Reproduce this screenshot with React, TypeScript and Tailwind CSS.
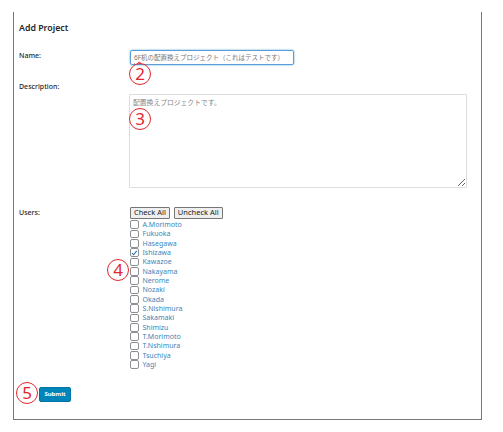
const USERS = [
  'A.Morimoto',
  'Fukuoka',
  'Hasegawa',
  'Ishizawa',
  'Kawazoe',
  'Nakayama',
  'Nerome',
  'Nozaki',
  'Okada',
  'S.Nishimura',
  'Sakamaki',
  'Shimizu',
  'T.Morimoto',
  'T.Nshimura',
  'Tsuchiya',
  'Yagi',
];

const CHECKED = ['Ishizawa'];

function Marker({ n, className }: { n: number; className: string }) {
  return (
    <div
      className={`absolute w-[22px] h-[22px] rounded-full border-[1.2px] border-[#e3262b] text-[#e3262b] text-[17px] leading-none flex items-center justify-center ${className}`}
    >
      <span className="-mt-[1px]">{n}</span>
    </div>
  );
}

function Box({ checked }: { checked: boolean }) {
  return (
    <span className="w-[8.5px] h-[8.5px] rounded-[2px] border border-[#8c8f94] bg-white flex items-center justify-center shrink-0">
      {checked && (
        <svg viewBox="0 0 10 10" className="w-[8px] h-[8px]">
          <path d="M1.5 5.2 L4 7.8 L8.8 1.8" fill="none" stroke="#2271b1" strokeWidth="1.6" />
        </svg>
      )}
    </span>
  );
}

export default function App() {
  return (
    <div
      className="min-h-[432px] bg-white pt-[12px] text-[#23282d]"
      style={{ fontFamily: '"Noto Sans", "Noto Sans CJK JP", sans-serif' }}
    >
      <div className="relative ml-[13px] w-[469px] h-[408px] border-x border-b border-[#777] pl-[5px] pr-[14px] pt-[10px]">
        <h2 className="text-[8.8px] leading-[12px] font-semibold">Add Project</h2>

        <div className="mt-[16px] flex items-start">
          <div className="w-[111px] pt-[1px] text-[7px] leading-[10px] font-medium">Name:</div>
          <div className="w-[164px] h-[15px] rounded-[2px] border border-[#5b9dd9] shadow-[0_0_2px_rgba(30,140,190,0.8)] px-[3px] flex items-center text-[6.5px] text-[#777] whitespace-nowrap overflow-hidden">
            <span className="underline decoration-wavy decoration-[#e3262b] decoration-[0.6px] underline-offset-[1px]">6F</span>
            <span>机の配置換えプロジェクト（これはテストです）</span>
          </div>
        </div>

        <div className="mt-[17px] flex items-start">
          <div className="w-[110px] text-[7px] leading-[10px] font-medium">Description:</div>
          <div className="pt-[12px] flex-1">
            <textarea
              readOnly
              defaultValue="配置換えプロジェクトです。"
              className="block w-full h-[94px] border border-[#ddd] rounded-[1px] px-[3px] py-[2px] text-[6.8px] leading-[10px] text-[#888] outline-none resize-y"
              style={{ fontFamily: '"Noto Sans CJK JP", sans-serif' }}
            />
          </div>
        </div>

        <div className="mt-[19px] flex items-start">
          <div className="w-[111px] text-[7px] leading-[12px] font-medium">Users:</div>
          <div>
            <div className="flex gap-[4px]">
              <button className="h-[12px] px-[3px] border border-[#767676] bg-[#efefef] rounded-[1px] text-[7.5px] leading-none text-[#222]">
                Check All
              </button>
              <button className="h-[12px] px-[3px] border border-[#767676] bg-[#efefef] rounded-[1px] text-[7.5px] leading-none text-[#222]">
                Uncheck All
              </button>
            </div>
            <ul className="mt-[1px]">
              {USERS.map(u => (
                <li key={u} className="h-[9.33px] flex items-center gap-[4px]">
                  <Box checked={CHECKED.includes(u)} />
                  <span className="text-[7px] leading-none text-[#3d85b8]">{u}</span>
                </li>
              ))}
            </ul>
          </div>
        </div>

        <button className="mt-[17.5px] ml-[20px] h-[15px] w-[32px] rounded-[2px] bg-[#0085ba] border border-[#0073aa] text-white text-[6px] font-bold leading-none">
          Submit
        </button>

        <Marker n={2} className="left-[115px] top-[51px]" />
        <Marker n={3} className="left-[115px] top-[96px]" />
        <Marker n={4} className="left-[93px] top-[247px]" />
        <Marker n={5} className="left-[2px] top-[370px]" />
      </div>
    </div>
  );
}
